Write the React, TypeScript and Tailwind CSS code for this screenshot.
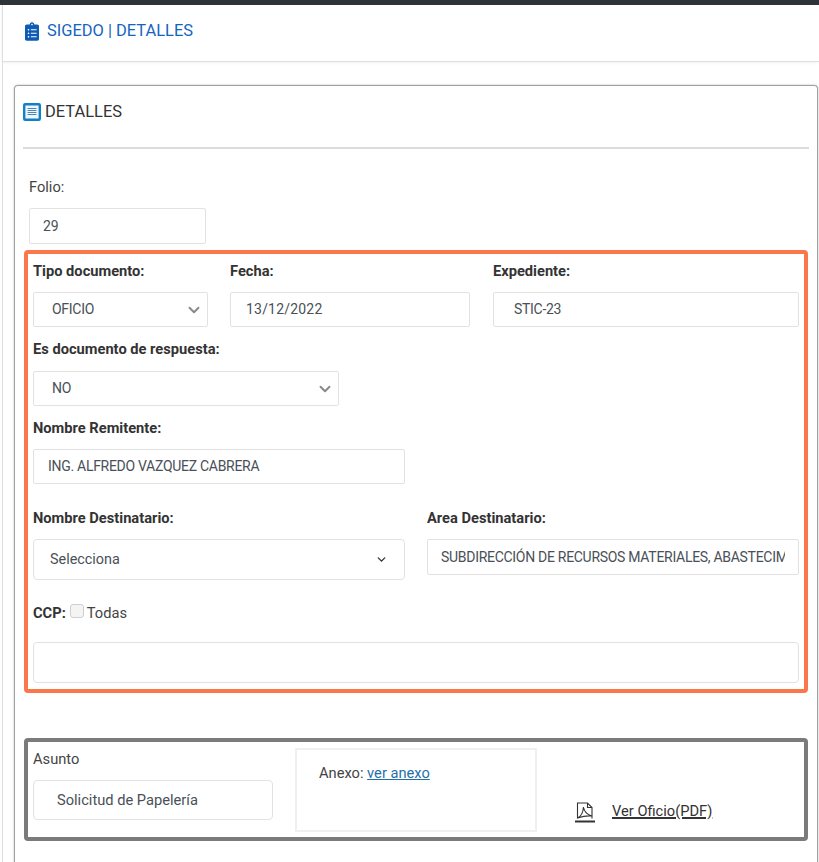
import { FaClipboardList } from 'react-icons/fa'
import { ChevronDown } from 'lucide-react'

function Field({ children, className }: { children?: React.ReactNode, className: string }) {
    return (
        <div className={`flex items-center border border-[#e2e2e2] rounded-[2px] text-[#495057] bg-white ${className}`}>
            {children}
        </div>
    )
}

function Label({ children, className = '' }: { children: React.ReactNode, className?: string }) {
    return <div className={`font-bold text-[14.67px] leading-[20px] text-[#333] ${className}`}>{children}</div>
}

function DetailsIcon() {
    return (
        <svg width="18" height="18" viewBox="0 0 18 18" className="shrink-0 -ml-[1px]">
            <rect x="1.200" y="1.200" width="15.600" height="15.600" rx="1" fill="#eef6fb" stroke="#1180c4" strokeWidth="2.400" />
            <path d="M4.500 5.500h9M4.500 7.500h9M4.500 9.500h9M4.500 11.500h9" stroke="#4d87b5" strokeWidth="1.200" />
        </svg>
    )
}

function PdfIcon() {
    return (
        <svg width="20" height="21" viewBox="0 0 20 21" fill="none" stroke="#333" strokeWidth="1.100" className="shrink-0">
            <path d="M2.500 16.500V1h10l4.500 4.500v11M12.500 1v4.500H17" />
            <path d="M2.500 16c3.500-1.500 5.500-5 6-11 .5 4 3 7.500 8.500 9-4-.5-9 .2-14.500 2z" />
            <path d="M0 19.500h20" strokeWidth="2" />
        </svg>
    )
}

export default function App() {
    return (
        <div className="h-[862px] overflow-hidden bg-white font-['Roboto',sans-serif] text-[14px] text-[#333]">
            <div className="h-[5px] bg-[#2f3438]" />

            <div className="h-[57px] ml-[2px] pl-[22px] pb-[4px] flex items-center gap-[8px] border-l border-b border-[#dedede] shadow-[0_1px_3px_rgba(0,0,0,0.06)]">
                <FaClipboardList className="text-[#0d5bb5] w-[14px] h-[19px]" />
                <span className="text-[16.45px] text-[#1565c0]">SIGEDO | DETALLES</span>
            </div>

            <div className="ml-[2px] border-l border-[#dedede] pl-[11px] pr-[1px] pt-[23px]">
                <div className="h-[900px] border border-[#a0a0a0] border-b-0 rounded-t-[4px] pl-[9px] pr-[8px] shadow-[0_0_2px_rgba(0,0,0,0.3)]">
                    <div className="flex items-center gap-[4px] h-[51px] pt-[1px] text-[16.45px] text-[#333]">
                        <DetailsIcon />
                        <span>DETALLES</span>
                    </div>
                    <div className="h-[2px] bg-[#dcdcdc] mt-[10px] -ml-[1px]" />

                    <div className="pl-[5px] mt-[28px] leading-[20px] text-[14.67px] text-[#444]">Folio:</div>
                    <Field className="ml-[5px] mt-[11px] w-[177px] h-[36px] pl-[13px]">29</Field>

                    {/* Orange group */}
                    <div className="mt-[6px] mr-[1px] h-[443px] border-[4px] border-[#f9774a] rounded-[4px] pl-[5px] pr-[5px] pt-[7px]">
                        <div className="flex gap-[22px]">
                            <div className="w-[175px]">
                                <Label>Tipo documento:</Label>
                                <Field className="mt-[11px] h-[35px] pl-[18px] pr-[4px] justify-between tracking-[-0.29px]">
                                    OFICIO
                                    <ChevronDown className="w-[18px] h-[18px] text-[#888]" strokeWidth={2.500} />
                                </Field>
                            </div>
                            <div className="w-[240px]">
                                <Label>Fecha:</Label>
                                <Field className="mt-[11px] h-[35px] pl-[15px] tracking-[0.2px]">13/12/2022</Field>
                            </div>
                            <div className="flex-1 ml-[1px]">
                                <Label>Expediente:</Label>
                                <Field className="mt-[11px] h-[35px] pl-[20px] tracking-[-0.29px]">STIC-23</Field>
                            </div>
                        </div>

                        <Label className="mt-[12px]">Es documento de respuesta:</Label>
                        <Field className="mt-[12px] w-[306px] h-[35px] pl-[18px] pr-[4px] justify-between tracking-[-0.29px]">
                            NO
                            <ChevronDown className="w-[18px] h-[18px] text-[#888]" strokeWidth={2.500} />
                        </Field>

                        <Label className="mt-[12px]">Nombre Remitente:</Label>
                        <Field className="mt-[11px] w-[372px] h-[35px] pl-[14px] tracking-[-0.29px]">ING. ALFREDO VAZQUEZ CABRERA</Field>

                        <div className="flex gap-[22px] mt-[24px]">
                            <div className="w-[372px]">
                                <Label>Nombre Destinatario:</Label>
                                <Field className="mt-[11px] h-[41px] pl-[16px] pr-[16px] justify-between rounded-[4px] text-[14.4px]">
                                    Selecciona
                                    <ChevronDown className="w-[13px] h-[13px] text-[#333]" strokeWidth={2.500} />
                                </Field>
                            </div>
                            <div className="flex-1 min-w-0">
                                <Label>Area Destinatario:</Label>
                                <Field className="mt-[11px] h-[36px] pl-[13px] pr-[13px] tracking-[-0.29px]">
                                    <span className="overflow-hidden whitespace-nowrap">SUBDIRECCIÓN DE RECURSOS MATERIALES, ABASTECIMIENTOS</span>
                                </Field>
                            </div>
                        </div>

                        <div className="flex items-center mt-[23px] h-[20px] text-[14.67px]">
                            <span className="font-bold text-[#333]">CCP:</span>
                            <span className="ml-[4px] mb-[5px] w-[14px] h-[14px] border border-[#cfcfcf] rounded-[3px] bg-[#f4f4f4]" />
                            <span className="ml-[3px] text-[#444]">Todas</span>
                        </div>
                        <Field className="mt-[19px] h-[41px] rounded-[4px]" />
                    </div>

                    {/* Gray group */}
                    <div className="mt-[45px] mr-[1px] h-[103px] border-[4px] border-[#7b7b7b] rounded-[4px] pl-[5px] pr-[5px] flex text-[14.67px]">
                        <div className="w-[240px] pt-[7px]">
                            <div className="leading-[20px] text-[#444]">Asunto</div>
                            <Field className="mt-[11px] h-[40px] pl-[23px] rounded-[4px]">Solicitud de Papelería</Field>
                        </div>
                        <div className="ml-[22px] mt-[6px] w-[242px] h-[84px] border-2 border-[#f0f0f0] pl-[22px] pt-[13px] leading-[20px] text-[#444]">
                            Anexo: <span className="text-[#1f6fa8] underline">ver anexo</span>
                        </div>
                        <div className="ml-[38px] mt-[60px] flex items-start gap-[17px] h-[24px]">
                            <PdfIcon />
                            <span className="leading-[18px] underline decoration-2 text-[#333]">Ver Oficio(PDF)</span>
                        </div>
                    </div>
                </div>
            </div>
        </div>
    )
}
